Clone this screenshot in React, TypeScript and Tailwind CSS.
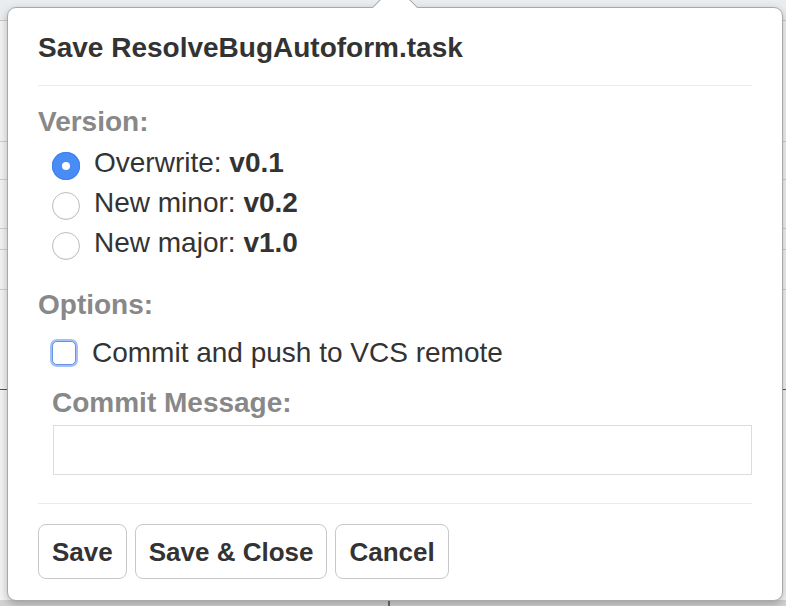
import React from "react";

const font = { fontFamily: '"Liberation Sans", Arial, Helvetica, sans-serif' };

function Radio({ checked }: { checked?: boolean }) {
  if (checked) {
    return (
      <div className="mt-[9px] flex h-[28px] w-[28px] shrink-0 items-center justify-center rounded-full bg-[#4a8cf5] shadow-[inset_0_0_0_1px_#3f7fe8]">
        <div className="h-[8px] w-[8px] rounded-full bg-white" />
      </div>
    );
  }
  return (
    <div className="mt-[9px] h-[28px] w-[28px] shrink-0 rounded-full border border-[#bdbdbd] bg-white shadow-[inset_0_-1px_1px_rgba(0,0,0,0.06)]" />
  );
}

function RadioRow({ label, version, checked }: { label: string; version: string; checked?: boolean }) {
  return (
    <div className="flex h-[40px] items-start pl-[14px]">
      <Radio checked={checked} />
      <div className="ml-[14px] text-[28px] leading-[40px] text-[#333]">
        {label} <span className="font-bold">{version}</span>
      </div>
    </div>
  );
}

function Btn({ children }: { children: React.ReactNode }) {
  return (
    <button className="h-[55px] rounded-[8px] border border-[#c8c8c8] bg-white px-[13px] text-[26px] font-bold leading-[30px] text-[#333]">
      {children}
    </button>
  );
}

export default function App() {
  return (
    <div className="relative h-[606px] w-[786px] overflow-hidden bg-[#f3f3f3]" style={font}>
      {/* background page */}
      <div className="flex h-full flex-col">
        <div className="h-[21px] shrink-0 border-b border-[#c9c9c9] bg-[#eaedf0]" />
        <div className="h-[121px] shrink-0 border-b border-[#cfcfcf]" />
        <div className="h-[38px] shrink-0 border-b border-[#cfcfcf]" />
        <div className="h-[49px] shrink-0 border-b border-[#cfcfcf]" />
        <div className="h-[21px] shrink-0 border-b border-[#cfcfcf]" />
        <div className="h-[40px] shrink-0 border-b border-[#cfcfcf]" />
        <div className="h-[100px] shrink-0 border-b border-[#555]" />
        <div className="flex-1" />
        <div className="flex h-[6px] shrink-0 bg-[#d2d2d2]">
          <div className="w-[388px]" />
          <div className="w-[2px] bg-[#6a6a6a]" />
        </div>
      </div>

      {/* popover */}
      <div className="absolute left-[7px] top-[7px] flex h-[594px] w-[776px] flex-col rounded-[9px] border border-[#a8a8a8] bg-white px-[30px] pb-[20px] pt-[24px] shadow-[0_3px_8px_rgba(0,0,0,0.25)]">
        {/* arrow */}
        <div className="absolute left-[371px] top-[-17px] h-[32px] w-[32px] rotate-45 border-l border-t border-[#a8a8a8] bg-white" />

        <div className="relative text-[28px] font-bold leading-[32px] text-[#333]">
          Save ResolveBugAutoform.task
        </div>
        <div className="mt-[21px] h-px w-full bg-[#ebebeb]" />

        <div className="mt-[20px] text-[28px] font-bold leading-[32px] text-[#888]">Version:</div>
        <div className="mt-[5px] flex flex-col">
          <RadioRow label="Overwrite:" version="v0.1" checked />
          <RadioRow label="New minor:" version="v0.2" />
          <RadioRow label="New major:" version="v1.0" />
        </div>

        <div className="mt-[26px] text-[28px] font-bold leading-[32px] text-[#888]">Options:</div>
        <div className="mt-[12px] flex h-[40px] items-center pl-[12px]">
          <div className="h-[28px] w-[28px] shrink-0 rounded-[7px] bg-[#a3c1f7] p-[2px]">
            <div className="h-full w-full rounded-[5px] border border-[#6591e0] bg-white" />
          </div>
          <div className="ml-[14px] text-[28px] leading-[40px] text-[#333]">Commit and push to VCS remote</div>
        </div>

        <div className="mt-[14px] pl-[14px] text-[28px] font-bold leading-[32px] text-[#888]">Commit Message:</div>
        <div className="ml-[15px] mt-[6px] h-[50px] border border-[#dcdcdc] bg-white" />

        <div className="mt-[28px] h-px w-full bg-[#ebebeb]" />

        <div className="mt-[20px] flex gap-[8px]">
          <Btn>Save</Btn>
          <Btn>Save &amp; Close</Btn>
          <Btn>Cancel</Btn>
        </div>
      </div>
    </div>
  );
}
